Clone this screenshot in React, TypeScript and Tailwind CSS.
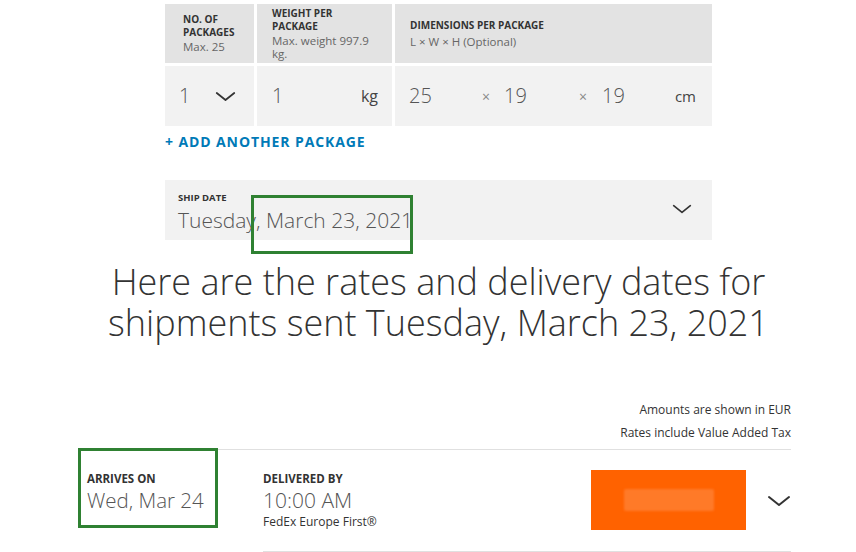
import React from "react";

function Chevron({ className }: { className?: string }) {
  return (
    <svg viewBox="0 0 24 12" className={className} fill="none" stroke="#333" strokeWidth="2" strokeLinecap="round" strokeLinejoin="round">
      <path d="M2 2 L12 10 L22 2" />
    </svg>
  );
}

export default function App() {
  const font = { fontFamily: '"Open Sans", "Liberation Sans", sans-serif' };
  return (
    <div className="relative w-[856px] h-[552px] overflow-hidden bg-white text-[#333]" style={font}>
      {/* top column */}
      <div className="ml-[165px] w-[547px] pt-[4px]">
        {/* table */}
        <div className="grid grid-cols-[89px_135px_1fr] grid-rows-[59px_60px] gap-[3px]">
          <div className="bg-[#e3e3e3] pl-[18px] flex flex-col justify-center">
            <div className="text-[10px] font-bold leading-[13px] text-[#333]">NO. OF<br />PACKAGES</div>
            <div className="text-[11.5px] leading-[15px] text-[#666]">Max. 25</div>
          </div>
          <div className="bg-[#e3e3e3] pl-[15px] flex flex-col justify-center">
            <div className="text-[10px] font-bold leading-[12.5px] text-[#333]">WEIGHT PER<br />PACKAGE</div>
            <div className="text-[11.5px] leading-[13px] text-[#666] mt-[2px]">Max. weight 997.9<br />kg.</div>
          </div>
          <div className="bg-[#e3e3e3] pl-[15px] flex flex-col justify-center">
            <div className="text-[10px] font-bold leading-[13px] text-[#333]">DIMENSIONS PER PACKAGE</div>
            <div className="text-[11.5px] leading-[15px] text-[#666] mt-[2px]">L × W × H (Optional)</div>
          </div>

          <div className="bg-[#f2f2f2] flex items-center pl-[14px]">
            <span className="text-[20px] font-light text-[#555] w-[36px]">1</span>
            <Chevron className="w-[21px] h-[11px]" />
          </div>
          <div className="bg-[#f2f2f2] flex items-center pl-[15px] pr-[14px]">
            <span className="text-[20px] font-light text-[#555] flex-1">1</span>
            <span className="text-[16px] text-[#444]">kg</span>
          </div>
          <div className="bg-[#f2f2f2] flex items-center pl-[14px] pr-[16px]">
            <span className="text-[20px] font-light text-[#555] w-[73px]">25</span>
            <span className="text-[14px] text-[#888] w-[22px]">×</span>
            <span className="text-[20px] font-light text-[#555] w-[75px]">19</span>
            <span className="text-[14px] text-[#888] w-[23px]">×</span>
            <span className="text-[20px] font-light text-[#555] flex-1">19</span>
            <span className="text-[15px] text-[#444]">cm</span>
          </div>
        </div>

        {/* add another package */}
        <div className="mt-[6px] h-[18px] flex items-center text-[14px] font-bold tracking-[0.9px] text-[#007ab7]">
          + ADD ANOTHER PACKAGE
        </div>

        {/* ship date */}
        <div className="mt-[30px] h-[60px] bg-[#f2f2f2] flex items-center pl-[13px] pr-[20px]">
          <div className="flex-1 pt-[4px]">
            <div className="text-[9.5px] font-bold leading-[12px] text-[#333]">SHIP DATE</div>
            <div className="text-[21px] font-light leading-[26px] text-[#555] mt-[3px]">Tuesday, March 23, 2021</div>
          </div>
          <Chevron className="w-[20px] h-[10px] mb-[2px]" />
        </div>

        {/* heading */}
        <h1 className="-mx-[80px] mt-[21px] text-center text-[36px] font-light leading-[41px] text-[#333]">
          Here are the rates and delivery dates for<br />shipments sent Tuesday, March 23, 2021
        </h1>
      </div>

      {/* bottom section */}
      <div className="ml-[78px] w-[713px] mt-[59px]">
        <div className="text-right text-[12px] leading-[15px] text-[#333]">
          <div>Amounts are shown in EUR</div>
          <div className="mt-[8px]">Rates include Value Added Tax</div>
        </div>
        <div className="mt-[9px] border-t border-[#e0e0e0] flex h-[103px]">
          <div className="w-[185px] pl-[9px] pt-[22px]">
            <div className="text-[11.5px] font-bold leading-[14px] text-[#333]">ARRIVES ON</div>
            <div className="text-[20.5px] font-light leading-[24px] text-[#555] mt-[2px]">Wed, Mar 24</div>
          </div>
          <div className="flex-1 flex flex-col">
            <div className="flex-1 flex items-start border-b border-[#e0e0e0]">
              <div className="flex-1 pt-[22px]">
                <div className="text-[11.5px] font-bold leading-[14px] text-[#333]">DELIVERED BY</div>
                <div className="text-[21px] font-light leading-[24px] text-[#555] mt-[2px]">10:00 AM</div>
                <div className="text-[12px] leading-[14px] text-[#333] mt-[3px]">FedEx Europe First®</div>
              </div>
              <div className="mt-[20px] w-[155px] h-[60px] bg-[#ff6200] flex items-center justify-center">
                <div className="w-[90px] h-[22px] bg-[#ff7a28] rounded-[2px] blur-[1px]" />
              </div>
              <div className="w-[45px] flex justify-end pt-[45px]">
                <Chevron className="w-[24px] h-[12px]" />
              </div>
            </div>
          </div>
        </div>
      </div>

      {/* annotation boxes */}
      <div className="absolute left-[251px] top-[195px] w-[162px] h-[59px] border-[3px] border-[#2f8132] pointer-events-none" />
      <div className="absolute left-[78px] top-[448px] w-[140px] h-[80px] border-[3px] border-[#2f8132] pointer-events-none" />
    </div>
  );
}
